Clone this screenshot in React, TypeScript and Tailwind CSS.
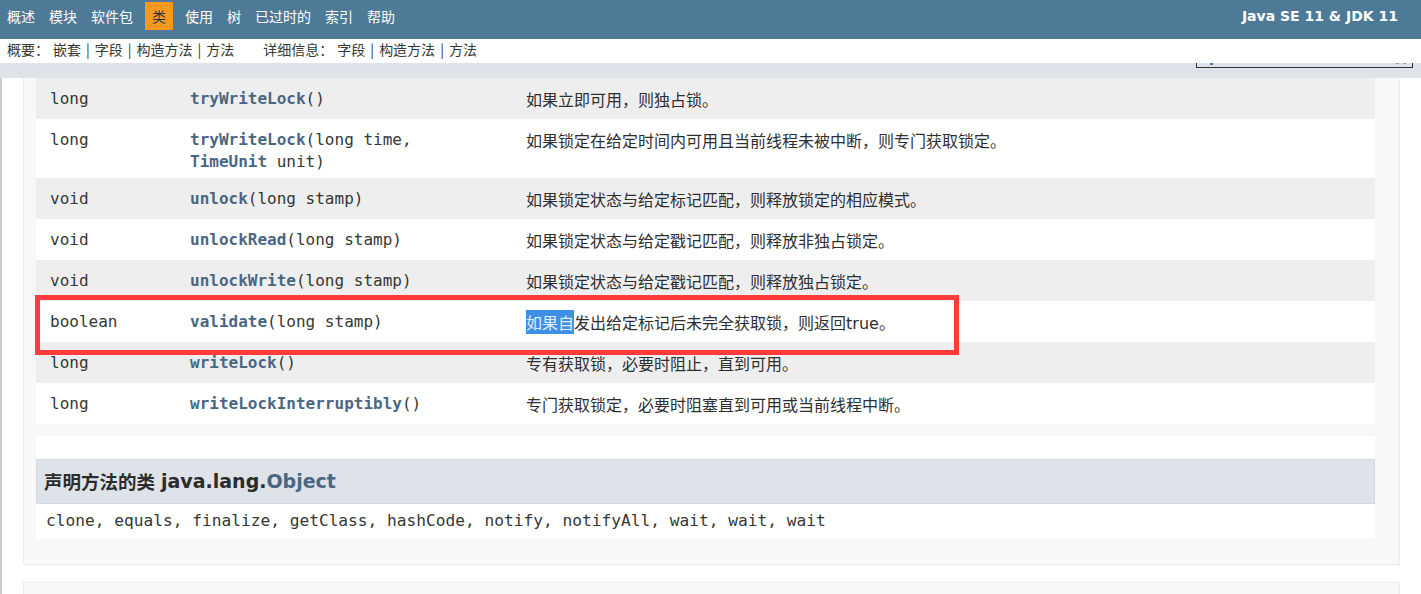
import type { ReactNode } from "react";

type Row = {
  type: string;
  name: string;
  params: string;
  second?: { name: string; rest: string };
  desc: ReactNode;
  tall?: boolean;
};

const mono = "font-['DejaVu_Sans_Mono','Liberation_Mono',monospace]";
const cjk = "font-['Noto_Sans_CJK_SC','DejaVu_Sans',sans-serif]";

const rows: Row[] = [
  { type: "long", name: "tryWriteLock", params: "()", desc: "如果立即可用，则独占锁。" },
  {
    type: "long",
    name: "tryWriteLock",
    params: "(long time,",
    second: { name: "TimeUnit", rest: " unit)" },
    desc: "如果锁定在给定时间内可用且当前线程未被中断，则专门获取锁定。",
    tall: true,
  },
  { type: "void", name: "unlock", params: "(long stamp)", desc: "如果锁定状态与给定标记匹配，则释放锁定的相应模式。" },
  { type: "void", name: "unlockRead", params: "(long stamp)", desc: "如果锁定状态与给定戳记匹配，则释放非独占锁定。" },
  { type: "void", name: "unlockWrite", params: "(long stamp)", desc: "如果锁定状态与给定戳记匹配，则释放独占锁定。" },
  {
    type: "boolean",
    name: "validate",
    params: "(long stamp)",
    desc: (
      <>
        <span className="bg-[#3d8fe8] text-[#e2ecf8]">如果自</span>发出给定标记后未完全获取锁，则返回
        <span className="font-['DejaVu_Sans',sans-serif]">true</span>。
      </>
    ),
  },
  { type: "long", name: "writeLock", params: "()", desc: "专有获取锁，必要时阻止，直到可用。" },
  { type: "long", name: "writeLockInterruptibly", params: "()", desc: "专门获取锁定，必要时阻塞直到可用或当前线程中断。" },
];

const navItems = ["概述", "模块", "软件包", "类", "使用", "树", "已过时的", "索引", "帮助"];

function Bar() {
  return <span className="mx-[5px]">|</span>;
}

export default function App() {
  return (
    <div className="relative h-[594px] w-[1421px] overflow-hidden bg-white text-[#353833]">
      {/* top nav */}
      <header className={`flex h-[39px] items-start justify-between bg-[#4d7a97] pl-[7px] pr-[23px] pt-[2px] text-white ${cjk}`}>
        <ul className="flex h-[28px] items-center gap-[14px] text-[14px]">
          {navItems.map((item) =>
            item === "类" ? (
              <li key={item} className="-mx-[2px] flex h-[28px] items-center bg-[#f8981d] px-[7px] text-[#253441]">
                {item}
              </li>
            ) : (
              <li key={item}>{item}</li>
            ),
          )}
        </ul>
        <div className="flex h-[28px] items-center font-['DejaVu_Sans',sans-serif] text-[14px] font-bold">
          Java SE 11 &amp; JDK 11
        </div>
      </header>

      {/* sub nav */}
      <div className={`flex h-[24px] items-center pb-[3px] pl-[7px] text-[14px] ${cjk}`}>
        <span>概要：</span>
        <span className="ml-[4px]">嵌套</span>
        <Bar />
        <span>字段</span>
        <Bar />
        <span>构造方法</span>
        <Bar />
        <span>方法</span>
        <span className="ml-[29px]">详细信息：</span>
        <span className="ml-[4px]">字段</span>
        <Bar />
        <span>构造方法</span>
        <Bar />
        <span>方法</span>
      </div>

      <div className="flex h-[15px] justify-end bg-[#dee3e9] pr-[8px]">
        <div className="relative h-[5px] w-[217px] border-x border-b border-[#333]">
          <span className="absolute left-[13px] top-0 h-[2px] w-[3px] bg-[#4a7aa8]" />
          <span className="absolute right-[6px] top-0 h-[1px] w-[10px] border-x-[3px] border-[#999]" />
        </div>
      </div>

      {/* content */}
      <main className="border-l-2 border-[#cccccc] pl-[21px] pr-[21px]">
        <section className="border-x border-b border-[#ededed] bg-[#f8f8f8] pb-[25px] pl-[12px] pr-[24px]">
          <div>
            {rows.map((row, i) => (
              <div
                key={i}
                className={`flex ${row.tall ? "h-[59px]" : "h-[41px]"} pl-[14px] pt-[10px] leading-[22px] ${
                  i % 2 === 0 ? "bg-[#eeeeef]" : "bg-white"
                }`}
              >
                <div className={`w-[140px] shrink-0 text-[16px] ${mono}`}>{row.type}</div>
                <div className={`w-[336px] shrink-0 text-[16px] ${mono}`}>
                  <span className="font-bold text-[#4a6782]">{row.name}</span>
                  {row.params}
                  {row.second ? (
                    <div>
                      <span className="font-bold text-[#4a6782]">{row.second.name}</span>
                      {row.second.rest}
                    </div>
                  ) : null}
                </div>
                <div className={`text-[16px] text-[#2f2f2f] ${cjk}`}>{row.desc}</div>
              </div>
            ))}
          </div>

          <div className="mt-[12px] bg-white pt-[23px]">
            <h3
              className={`flex h-[45px] items-center border border-[#d0d9e0] bg-[#dee3e9] pl-[7px] text-[18.5px] font-bold text-[#2c2c2c] ${cjk}`}
            >
              声明方法的类
              <span className="ml-[6px] font-['DejaVu_Sans',sans-serif] text-[19px]">
                java.lang.<span className="text-[#4a6782]">Object</span>
              </span>
            </h3>
            <div className={`flex h-[35px] items-center pl-[10px] text-[16.2px] ${mono}`}>
              clone, equals, finalize, getClass, hashCode, notify, notifyAll, wait, wait, wait
            </div>
          </div>
        </section>

        <section className="mt-[17px] h-[40px] border-x border-t border-[#ededed] bg-[#f8f8f8]" />
      </main>

      {/* red annotation box */}
      <div className="pointer-events-none absolute left-[35px] top-[295px] h-[60px] w-[924px] border-[5px] border-[#ff3b3b]" />
    </div>
  );
}
